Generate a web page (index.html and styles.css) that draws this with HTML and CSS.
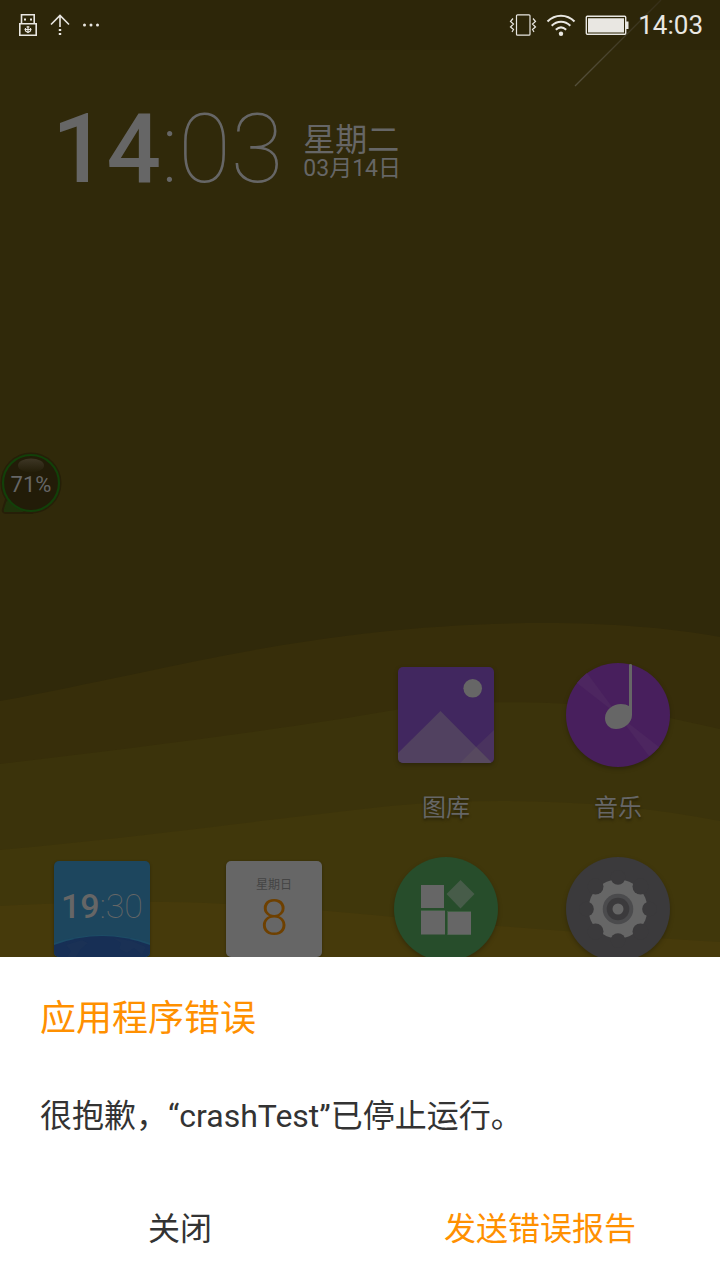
FILE: index.html
```html
<!DOCTYPE html>
<html lang="zh-CN">
<head>
<meta charset="utf-8">
<meta name="viewport" content="width=device-width, initial-scale=1">
<title>应用程序错误</title>
<link rel="stylesheet" href="styles.css">
</head>
<body>
<div class="screen">
  <main class="home">
    <svg class="wallpaper" viewBox="0 0 720 957" preserveAspectRatio="none" aria-hidden="true">
      <defs>
        <linearGradient id="streak" x1="575" y1="86" x2="661" y2="0" gradientUnits="userSpaceOnUse">
          <stop offset="0" stop-color="#55503c"/><stop offset="1" stop-color="#39321a"/>
        </linearGradient>
      </defs>
      <path fill="#372e0a" d="M0 701C50 692 90 683 130 675C250 649 380 623 545 623C610 623 670 628 720 637V957H0Z"/>
      <path fill="#3b330b" d="M0 764C150 746 300 727 400 709C480 698 600 700 670 718L720 729V957H0Z"/>
      <path fill="#40370b" d="M0 850C150 836 270 819 390 806C500 796 620 801 720 821V957H0Z"/>
      <path fill="#463a0b" d="M0 906C80 902 160 900 225 904C320 908 410 920 498 926C570 931 650 938 720 942V957H0Z"/>
      <path stroke="url(#streak)" stroke-width="1.2" d="M575 86L661 0"/>
    </svg>

    <header class="status">
      <div class="status-left">
        <svg width="20" height="24" viewBox="0 0 20 24" fill="none" stroke="#e9e7e2" stroke-width="1.6" role="img" aria-label="USB">
          <path d="M3.5 10V1.8H16.2V10M1.8 10.8H18.2V22.2H1.8Z"/>
          <path stroke="none" fill="#e9e7e2" d="M6 5.5h2v2H6zM12 5.5h2v2h-2z"/>
          <path stroke-width="1.2" d="M10 13V20M6.500 16.500H13.500M7.500 15V18L10 19.500L12.500 18V15M8.500 14H11.500"/>
        </svg>
        <svg width="20" height="24" viewBox="0 0 20 24" fill="none" stroke="#e9e7e2" stroke-width="1.6" role="img" aria-label="上传">
          <path d="M1 11.5L10 2.5L19 11.5M10 3V14"/>
          <path stroke-width="2.4" d="M10 16V18M10 20V22"/>
        </svg>
        <svg width="18" height="24" viewBox="0 0 18 24" fill="#e9e7e2" role="img" aria-label="更多通知">
          <circle cx="2.5" cy="12" r="1.5"/><circle cx="9" cy="12" r="1.5"/><circle cx="15.5" cy="12" r="1.5"/>
        </svg>
      </div>
      <div class="status-right">
        <svg width="28" height="24" viewBox="0 0 28 24" fill="none" stroke="#e9e7e2" stroke-width="1.2" role="img" aria-label="振动">
          <rect x="7.5" y="1.8" width="13.5" height="20.4" rx="1"/>
          <path d="M4 5.500L1.500 8.500L4.500 11L1.500 14L4.500 16.500L3 19M24 5.500L26.500 8.500L23.500 11L26.500 14L23.500 16.500L25 19"/>
        </svg>
        <svg width="30" height="24" viewBox="0 0 30 24" fill="none" stroke="#e9e7e2" stroke-width="2" role="img" aria-label="WLAN">
          <path d="M1.5 8.5C9 0.700 21 0.700 28.500 8.500M5.700 12.700C11 7.300 19 7.300 24.300 12.700M9.800 16.700C13 13.800 17 13.800 20.200 16.700"/>
          <circle cx="15" cy="20.8" r="2.2" fill="#e9e7e2" stroke="none"/>
        </svg>
        <svg width="44" height="24" viewBox="0 0 44 24" role="img" aria-label="电池">
          <rect x="1.3" y="3.3" width="39.4" height="18" rx="1" fill="none" stroke="#e9e7e2" stroke-width="1.4"/>
          <path fill="#e9e7e2" d="M3 5.200H39V19.400H3ZM41 8.500H43.500V16H41Z"/>
        </svg>
        <time class="status-time">14:03</time>
      </div>
    </header>

    <section class="widget" aria-label="时钟">
      <time class="big-time"><b>14</b><span class="minutes">:03</span></time>
      <div class="date">
        <span class="weekday">星期二</span>
        <span class="day">03月14日</span>
      </div>
    </section>

    <button class="meter" type="button" aria-label="内存 71%">
      <svg width="64" height="64" viewBox="0 0 64 64" aria-hidden="true">
        <defs><linearGradient id="gloss" x1="0" y1="0" x2="0" y2="1"><stop offset="0" stop-color="#3d3625"/><stop offset="1" stop-color="#231d08"/></linearGradient></defs>
        <path fill="#21360a" stroke="#261f08" stroke-width="2" d="M8 42L3 58Q2 62 6 62H31Z"/>
        <circle cx="31" cy="32" r="30.5" fill="#261f08"/>
        <path fill="#1f330b" d="M8 47L4 61H24Z"/>
        <circle cx="31" cy="32" r="28" fill="#221c08" stroke="#124009" stroke-width="2.2"/>
        <ellipse cx="31" cy="14.5" rx="13" ry="7" fill="url(#gloss)"/>
      </svg>
      <span class="meter-value">71%</span>
    </button>

    <nav class="apps" aria-label="应用">
      <button class="app app-gallery" type="button">
        <svg class="icon" width="104" height="104" viewBox="0 0 104 104" aria-hidden="true">
          <defs><clipPath id="tile"><rect x="4" y="4" width="96" height="96" rx="5"/></clipPath></defs>
          <g clip-path="url(#tile)">
            <rect x="4" y="4" width="96" height="96" fill="#41275f"/>
            <path fill="#4a335f" d="M100 67V100H65Z"/>
            <path fill="#514160" d="M4 90L46.5 48L98 100H4Z"/>
            <path fill="#57495f" d="M66 100L82 84L98 100Z"/>
            <circle cx="78.7" cy="25.3" r="9.3" fill="#666"/>
          </g>
        </svg>
        <span class="label">图库</span>
      </button>
      <button class="app" type="button">
        <svg class="icon" width="104" height="104" viewBox="0 0 104 104" aria-hidden="true">
          <circle cx="52" cy="52" r="52" fill="#481f5d"/>
          <path fill="#4d2660" d="M52 52L11 20A52 52 0 0 1 21 10ZM52 52L93 84A52 52 0 0 1 83 93Z"/>
          <path fill="#666" d="M63 2Q63 1 64.500 1T66 2V52C66 60 58 66 50 66C43 66 39 61 39 55C39 47 47 41 55 41Q60 41 63 43Z"/>
        </svg>
        <span class="label">音乐</span>
      </button>
      <button class="app app-clock" type="button" aria-label="时钟">
        <span class="tile tile-clock">
          <svg class="globe" viewBox="0 0 96 24" aria-hidden="true">
            <path fill="#1d4c66" d="M0 10Q48 -6 96 10V24H0Z"/>
            <path fill="#172f55" d="M0 12Q48 -6 96 12V24H0Z"/>
            <path fill="#1a3155" d="M12 12L28 7L34 10L27 16L22 24H13L17 18ZM59 5L78 8L92 14L88 22L80 15L73 20L65 16L67 10Z"/>
          </svg>
          <span class="tile-time"><b>19</b><span class="thin">:30</span></span>
        </span>
      </button>
      <button class="app" type="button" aria-label="日历">
        <span class="tile tile-calendar">
          <span class="cal-week">星期日</span>
          <span class="cal-day">8</span>
        </span>
      </button>
      <button class="app" type="button" aria-label="应用中心">
        <svg class="icon" width="104" height="104" viewBox="0 0 104 104" aria-hidden="true">
          <circle cx="52" cy="52" r="52" fill="#274d2b"/>
          <path fill="#3f5e42" d="M27 53H51V55H27ZM53 54H77V78H53Z"/>
          <path fill="#666" d="M27 28H50V51H27ZM27 54H51V77.500H27ZM54 55H77V77.500H54Z"/>
          <path fill="#475c49" d="M66.5 23L80.5 37L66.5 51.5L52.5 37Z"/>
        </svg>
      </button>
      <button class="app" type="button" aria-label="设置">
        <svg class="icon" width="104" height="104" viewBox="0 0 104 104" aria-hidden="true">
          <circle cx="52" cy="52" r="52" fill="#3b3a3c"/>
          <circle cx="52" cy="52" r="29.5" fill="#666"/>
          <g fill="#3b3a3c">
            <circle cx="52" cy="20.5" r="7.3"/><circle cx="52" cy="83.5" r="7.3"/>
            <circle cx="20.5" cy="52" r="7.3"/><circle cx="83.5" cy="52" r="7.3"/>
            <circle cx="29.5" cy="29.5" r="8"/><circle cx="74.5" cy="29.5" r="8"/>
            <circle cx="29.5" cy="74.5" r="8"/><circle cx="74.5" cy="74.5" r="8"/>
          </g>
          <circle cx="52" cy="52" r="15.3" fill="#4b4b4d"/>
          <circle cx="52" cy="52" r="11.3" fill="#3b3a3c"/>
          <circle cx="52" cy="52" r="5.5" fill="#666"/>
        </svg>
      </button>
    </nav>
  </main>

  <section class="dialog" role="alertdialog" aria-labelledby="dialog-title" aria-describedby="dialog-message">
    <h1 class="dialog-title" id="dialog-title">应用程序错误</h1>
    <p class="dialog-message" id="dialog-message">很抱歉，“crashTest”已停止运行。</p>
    <div class="dialog-actions">
      <button class="action" type="button">关闭</button>
      <button class="action action-primary" type="button">发送错误报告</button>
    </div>
  </section>
</div>
</body>
</html>
```
FILE: styles.css
```css
* {
  box-sizing: border-box;
}

body {
  margin: 0;
  font-family: Roboto, "Noto Sans CJK SC", sans-serif;
}

button {
  border: 0;
  padding: 0;
  background: none;
  color: inherit;
  font: inherit;
}

.screen {
  display: flex;
  flex-direction: column;
  height: 100vh;
}

.home {
  position: relative;
  display: flex;
  flex: 1 1 0;
  flex-direction: column;
  min-height: 0;
  overflow: hidden;
  background: #30290a;
  color: #666;
}

.wallpaper {
  position: absolute;
  inset: 0;
  width: 100%;
  height: 100%;
}

.status,
.widget,
.apps {
  position: relative;
}

.status {
  display: flex;
  justify-content: space-between;
  align-items: center;
  height: 50px;
  padding: 0 17px 0 18px;
  background: rgba(0, 0, 0, 0.05);
  color: #e9e7e2;
}

.status-left,
.status-right {
  display: flex;
  align-items: center;
}

.status-left {
  gap: 12px;
}

.status-right {
  gap: 9px;
}

.status-time {
  font-size: 26px;
  line-height: 52px;
}

.widget {
  display: flex;
  align-items: center;
  gap: 20px;
  padding: 43px 52px 0;
}

.big-time {
  font-size: 96px;
  line-height: 112px;
}

.big-time b {
  font-weight: 500;
}

.minutes,
.thin {
  font-weight: 100;
}

.date {
  display: flex;
  flex-direction: column;
  padding-top: 8px;
}

.weekday {
  font-size: 32px;
  line-height: 32px;
}

.day {
  font-size: 23px;
  line-height: 26px;
}

.meter {
  position: absolute;
  top: 451px;
  left: 0;
  width: 64px;
  height: 64px;
}

.meter svg {
  display: block;
}

.meter-value {
  position: absolute;
  inset: 0 2px 0 0;
  font-size: 22px;
  line-height: 68px;
  text-align: center;
}

.apps {
  display: grid;
  grid-template-columns: repeat(4, 1fr);
  row-gap: 30px;
  margin: auto 16px -4px;
}

.app {
  display: flex;
  flex-direction: column;
  align-items: center;
  gap: 22px;
}

.app-gallery {
  grid-column: 3;
}

.app-clock {
  grid-column: 1;
}

.icon {
  display: block;
  filter: drop-shadow(0 2px 2px rgba(0, 0, 0, 0.25));
}

.label {
  font-size: 24px;
  line-height: 38px;
  text-shadow: 0 2px 3px rgba(0, 0, 0, 0.4);
}

.tile {
  position: relative;
  display: flex;
  flex-direction: column;
  align-items: center;
  width: 96px;
  height: 96px;
  margin: 4px;
  border-radius: 5px;
  overflow: hidden;
  box-shadow: 0 1px 3px rgba(0, 0, 0, 0.3);
}

.tile-clock {
  background: #1d465e;
}

.tile-time {
  padding-top: 25px;
  font-size: 34px;
  line-height: 40px;
}

.tile-time b {
  font-weight: 500;
}

.globe {
  position: absolute;
  bottom: 0;
  left: 0;
  width: 100%;
}

.tile-calendar {
  padding-top: 15px;
  background: #666;
}

.cal-week {
  color: #444;
  font-size: 12px;
  line-height: 18px;
}

.cal-day {
  color: #6e4000;
  font-size: 50px;
  font-weight: 300;
  line-height: 48px;
}

.dialog {
  padding: 35px 0 15px;
  background: #fff;
  color: #333;
}

.dialog-title {
  margin: 0 40px;
  color: #ff9000;
  font-size: 36px;
  font-weight: 400;
  line-height: 54px;
}

.dialog-message {
  margin: 46px 40px 0;
  font-size: 32px;
  line-height: 48px;
}

.dialog-actions {
  display: grid;
  grid-template-columns: 1fr 1fr;
  margin-top: 53px;
}

.action {
  padding: 12px 0;
  font-size: 32px;
  line-height: 48px;
}

.action-primary {
  color: #ff9000;
}
```
